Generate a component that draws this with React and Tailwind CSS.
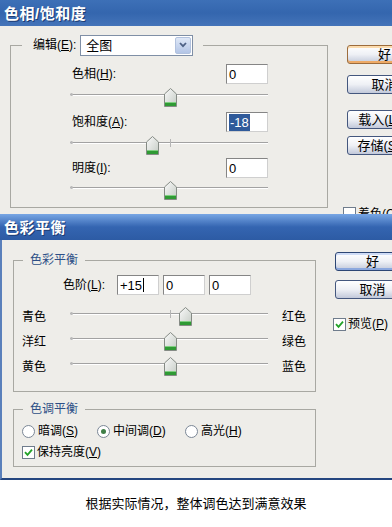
import React from 'react';

const FONT = "font-['Liberation_Sans','Noto_Sans_CJK_SC',sans-serif]";

// underlined access key letter
const K = ({ children }) => <span className="underline underline-offset-[1px]">{children}</span>;

const TitleBar = ({ title, top }) => (
  <div
    className={`h-[26px] shrink-0 flex items-center pl-[4px] text-white text-[15px] font-bold leading-none tracking-[0.5px] [text-shadow:1px_1px_0_#1d3c73] ${
      top
        ? 'bg-gradient-to-b from-[#3d70b7] via-[#3466ae] to-[#4474b9]'
        : 'bg-gradient-to-b from-[#78a6e4] via-[#3465b1] to-[#2d5ba4]'
    }`}
  >
    {title}
  </div>
);

const Field = ({ children, sel, caret }) => (
  <div className="w-[42px] h-[20px] shrink-0 bg-white border border-[#858585] border-r-[#cfcfcf] border-b-[#cfcfcf] flex items-center pl-[2px] text-[13px] leading-none text-black">
    {sel ? <span className="bg-[#2f5a9a] text-white px-[1px] py-[2px]">{children}</span> : children}
    {caret && <span className="w-px h-[14px] bg-black ml-[1px]" />}
  </div>
);

const Thumb = () => (
  <svg width="13" height="19" viewBox="0 0 13 19">
    <defs>
      <linearGradient id="thumbFill" x1="0" y1="0" x2="1" y2="1">
        <stop offset="0" stopColor="#fafafa" />
        <stop offset="1" stopColor="#c4cbc4" />
      </linearGradient>
    </defs>
    <path d="M0.5 6 L6.5 0.5 L12.5 6 L12.5 18.5 L0.5 18.5 Z" fill="url(#thumbFill)" stroke="#858b85" />
    <rect x="1" y="14.5" width="11" height="3.5" fill="#2f9a34" />
    <rect x="1" y="14" width="11" height="1" fill="#7fcf80" />
  </svg>
);

const Slider = ({ at, tick }) => (
  <div className="relative w-[198px] h-[19px] pt-[6px] shrink-0">
    <div className="h-[2px] border-t border-[#a2a2a2] border-b border-b-white" />
    <span className="absolute left-0 top-[5px] w-[3px] h-[3px] rounded-full bg-[#b8b8b8]" />
    {tick !== undefined && (
      <span className="absolute top-[3px] w-px h-[8px] bg-[#b5b5b5]" style={{ left: tick }} />
    )}
    <span className="absolute top-0" style={{ left: at - 6.5 }}>
      <Thumb />
    </span>
  </div>
);

const Btn = ({ children, focus, blue }) => (
  <div
    className={`w-[75px] h-[19px] shrink-0 rounded-[3px] border bg-gradient-to-b from-white via-[#eef0f5] to-[#c2c9da] flex items-center justify-center text-[13px] leading-none text-black ${
      focus
        ? 'border-[#9c6c3c] shadow-[inset_0_-2px_0_#eeaa66,inset_0_2px_0_#fcdcae]'
        : blue
        ? 'border-[#2d4674] shadow-[inset_0_-2px_0_#8ca8de,inset_0_2px_0_#cfdcf6]'
        : 'border-[#44577e]'
    }`}
  >
    {children}
  </div>
);

const Check = ({ on }) => (
  <span className="w-[13px] h-[13px] shrink-0 bg-white border border-[#6f7c8c] flex items-center justify-center">
    {on && (
      <svg width="9" height="9" viewBox="0 0 9 9">
        <path d="M1 4.2 L3.5 6.8 L8 1.6" fill="none" stroke="#22a228" strokeWidth="1.8" />
      </svg>
    )}
  </span>
);

const Radio = ({ on }) => (
  <span className="w-[13px] h-[13px] shrink-0 rounded-full bg-white border border-[#7b8796] flex items-center justify-center">
    {on && <span className="w-[5px] h-[5px] rounded-full bg-[#3f7f46]" />}
  </span>
);

const HueRow = ({ label, value, sel }) => (
  <div className="w-[198px] h-[20px] flex items-center justify-between">
    <span className="pl-[2px] text-[12px] leading-none">{label}</span>
    <Field sel={sel}>{value}</Field>
  </div>
);

const BalanceRow = ({ left, right, at, tick }) => (
  <div className="h-[25px] flex items-center pl-[8px] text-[12px] leading-none">
    <span className="w-[48px]">{left}</span>
    <Slider at={at} tick={tick} />
    <span className="ml-[14px]">{right}</span>
  </div>
);

export default function App() {
  return (
    <div className={`w-[392px] h-[527px] overflow-hidden bg-white flex flex-col text-black ${FONT}`}>
      {/* 色相/饱和度 */}
      <div className="h-[214px] shrink-0 overflow-hidden flex flex-col">
        <TitleBar title="色相/饱和度" top />
        <div className="flex-1 bg-[#eeede9] flex">
          <fieldset className="ml-[10px] mt-[8px] w-[318px] shrink-0 self-start border border-[#a8a8a2] pb-[7px]">
            <legend className="ml-[11px] px-[10px] pl-[11px]">
              <div className="h-[22px] flex items-center gap-[4px] text-[12px] leading-none">
                <span>编辑(<K>E</K>):</span>
                <div className="w-[113px] h-[21px] bg-white border border-[#7f8fa6] flex">
                  <span className="flex-1 flex items-center pl-[5px] text-[13px] leading-none">全图</span>
                  <span className="w-[16px] my-[1px] mr-[1px] rounded-[2px] bg-gradient-to-b from-[#dfe8f7] to-[#b3c5e6] border border-[#b2c2de] flex items-center justify-center">
                    <svg width="8" height="6" viewBox="0 0 8 6">
                      <path d="M1 1 L4 4.2 L7 1" fill="none" stroke="#4d6185" strokeWidth="1.8" />
                    </svg>
                  </span>
                </div>
              </div>
            </legend>
            <div className="pl-[59px] flex flex-col">
              <div className="mt-[8px]">
                <HueRow label={<>色相(<K>H</K>):</>} value="0" />
              </div>
              <div className="mt-[4px]">
                <Slider at={100} />
              </div>
              <div className="mt-[5px]">
                <HueRow label={<>饱和度(<K>A</K>):</>} value="-18" sel />
              </div>
              <div className="mt-[4px]">
                <Slider at={82} tick={100} />
              </div>
              <div className="mt-[3px]">
                <HueRow label={<>明度(<K>I</K>):</>} value="0" />
              </div>
              <div className="mt-[3px]">
                <Slider at={100} />
              </div>
            </div>
          </fieldset>
          <div className="ml-[19px] pt-[19px] flex flex-col">
            <Btn focus>好</Btn>
            <div className="mt-[11px]">
              <Btn>取消</Btn>
            </div>
            <div className="mt-[16px]">
              <Btn>载入(<K>L</K>)...</Btn>
            </div>
            <div className="mt-[7px]">
              <Btn>存储(<K>S</K>)...</Btn>
            </div>
            <div className="mt-[52px] -ml-[4px] flex items-center gap-[2px] text-[12px] leading-none">
              <Check />
              <span>着色(<K>O</K>)</span>
            </div>
          </div>
        </div>
      </div>

      {/* 色彩平衡 */}
      <div className="h-[266px] shrink-0 flex flex-col">
        <TitleBar title="色彩平衡" />
        <div className="flex-1 bg-[#eeede9] border-l-2 border-l-[#5a80bb] border-b-2 border-b-[#24467f] flex">
          <div className="ml-[11px] flex flex-col">
            <fieldset className="mt-[12px] w-[303px] border border-[#a8a8a2] pb-[12px]">
              <legend className="ml-[9px] px-[7px] h-[16px] text-[12px] leading-[16px] text-[#2d4f86]">色彩平衡</legend>
              <div className="mt-[7px] h-[20px] flex items-center pl-[49px] text-[12px] leading-none">
                <span className="w-[54px]">色阶(<K>L</K>):</span>
                <div className="flex gap-[4px]">
                  <Field caret>+15</Field>
                  <Field>0</Field>
                  <Field>0</Field>
                </div>
              </div>
              <div className="mt-[9px]">
                <BalanceRow left="青色" right="红色" at={115} tick={100} />
                <BalanceRow left="洋红" right="绿色" at={100} />
                <BalanceRow left="黄色" right="蓝色" at={100} />
              </div>
            </fieldset>
            <fieldset className="mt-[9px] w-[303px] border border-[#a8a8a2] pb-[4px]">
              <legend className="ml-[9px] px-[7px] h-[16px] text-[12px] leading-[16px] text-[#2d4f86]">色调平衡</legend>
              <div className="mt-[4px] h-[20px] flex items-center pl-[8px] text-[12px] leading-none">
                <div className="w-[75px] flex items-center gap-[3px]">
                  <Radio />
                  <span>暗调(<K>S</K>)</span>
                </div>
                <div className="w-[88px] flex items-center gap-[3px]">
                  <Radio on />
                  <span>中间调(<K>D</K>)</span>
                </div>
                <div className="flex items-center gap-[3px]">
                  <Radio />
                  <span>高光(<K>H</K>)</span>
                </div>
              </div>
              <div className="mt-[1px] h-[20px] flex items-center gap-[2px] pl-[8px] text-[12px] leading-none">
                <Check on />
                <span>保持亮度(<K>V</K>)</span>
              </div>
            </fieldset>
          </div>
          <div className="ml-[19px] pt-[12px] flex flex-col">
            <Btn blue>好</Btn>
            <div className="mt-[9px]">
              <Btn>取消</Btn>
            </div>
            <div className="mt-[17px] -ml-[2px] h-[16px] flex items-center gap-[2px] text-[12px] leading-none">
              <Check on />
              <span>预览(<K>P</K>)</span>
            </div>
          </div>
        </div>
      </div>

      <div className="flex-1 flex items-center justify-center text-[13px] leading-none">
        根据实际情况，整体调色达到满意效果
      </div>
    </div>
  );
}
